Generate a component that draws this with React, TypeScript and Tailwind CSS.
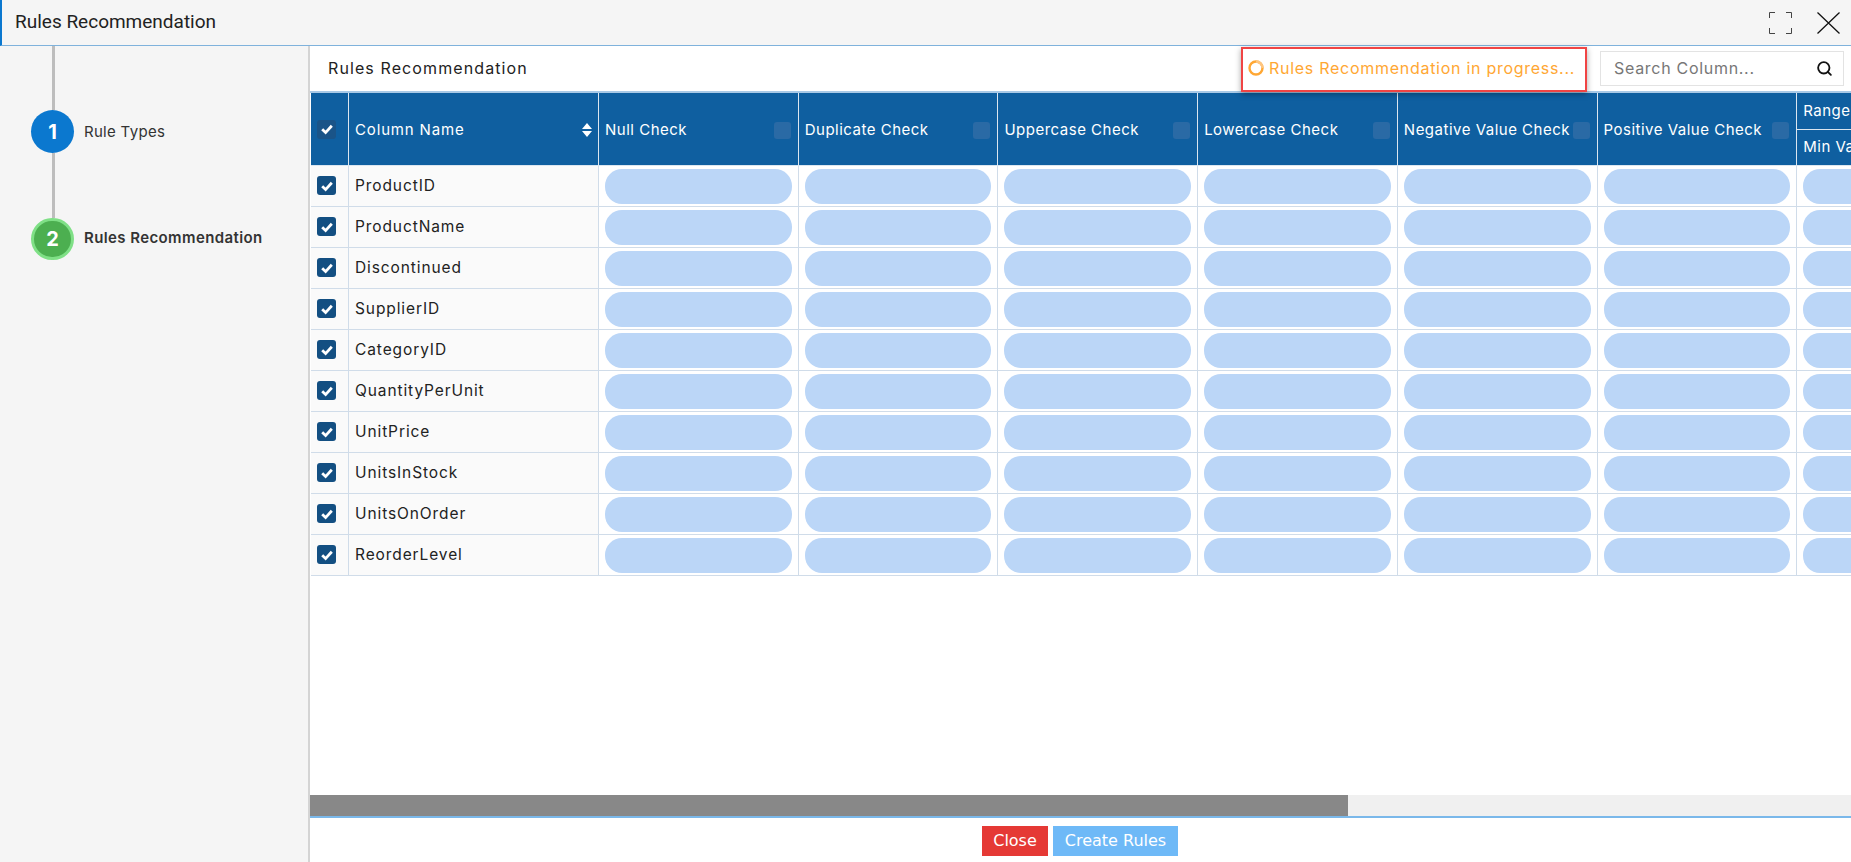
import { Search } from 'lucide-react';

const columns = ['ProductID', 'ProductName', 'Discontinued', 'SupplierID', 'CategoryID', 'QuantityPerUnit', 'UnitPrice', 'UnitsInStock', 'UnitsOnOrder', 'ReorderLevel'];
const checks = ['Null Check', 'Duplicate Check', 'Uppercase Check', 'Lowercase Check', 'Negative Value Check', 'Positive Value Check'];

function CheckBox({ dim }: { dim?: boolean }) {
  return (
    <span className={`flex h-[19px] w-[19px] items-center justify-center rounded-[3px] ${dim ? 'bg-[#1a5488]' : 'bg-[#134f82]'}`}>
      <svg viewBox="0 0 14 14" className="h-[14px] w-[14px]">
        <path d="M2.2 7.3 5.6 10.6 11.8 3.8" fill="none" stroke="#fff" strokeWidth="2.8" />
      </svg>
    </span>
  );
}

export default function App() {
  return (
    <div className="flex h-[862px] w-[1851px] flex-col overflow-hidden bg-white font-['Inter',sans-serif] text-[#222]">
      {/* Title bar */}
      <div className="flex h-[46px] shrink-0 items-center justify-between border-b border-b-[#7fb2dc] border-l-2 border-l-[#0b78cf] bg-[#f5f5f5] pl-[13px] pr-[11px]">
        <span className="font-['Roboto',sans-serif] text-[19px] text-[#222]">Rules Recommendation</span>
        <div className="flex items-center gap-[25px]">
          <svg viewBox="0 0 23 22" className="h-[22px] w-[23px]" fill="none" stroke="#444" strokeWidth="1">
            <path d="M.5 6V.5H6M17 .5h5.5V6M.5 16v5.5H6M17 21.5h5.5V16" />
          </svg>
          <svg viewBox="0 0 23 22" className="h-[22px] w-[23px]" fill="none" stroke="#111" strokeWidth="1.3">
            <path d="M.5.5l22 21M22.5.5l-22 21" />
          </svg>
        </div>
      </div>

      <div className="flex min-h-0 flex-1">
        {/* Stepper */}
        <div className="w-[310px] shrink-0 border-r-2 border-r-[#d4d4d4] bg-[#f5f5f5] pl-[31px]">
          <div className="ml-[21px] h-[64px] w-[3px] bg-[#bdbdbd]" />
          <div className="flex items-center gap-[10px]">
            <span className="flex h-[43px] w-[43px] items-center justify-center rounded-full bg-[#0b78cf] text-[20px] font-bold text-white">1</span>
            <span className="pt-[2px] text-[15px] tracking-[0.3px] text-[#333]">Rule Types</span>
          </div>
          <div className="ml-[21px] h-[65px] w-[3px] bg-[#bdbdbd]" />
          <div className="flex items-center gap-[10px]">
            <span className="flex h-[42px] w-[43px] items-center justify-center rounded-full border-[3px] border-[#7fe086] bg-[#4caf50] text-[20px] font-bold text-white">2</span>
            <span className="pb-[1px] text-[15px] font-semibold tracking-[0.4px] text-[#333]">Rules Recommendation</span>
          </div>
        </div>

        <div className="flex min-w-0 flex-1 flex-col">
          {/* Toolbar */}
          <div className="flex h-[47px] shrink-0 items-center border-b-2 border-b-[#a9c9e6] pl-[18px] pr-[7px]">
            <span className="pb-[2px] text-[16px] tracking-[1.1px] text-[#222]">Rules Recommendation</span>
            <div className="relative z-10 ml-auto flex h-[45px] w-[346px] translate-y-[1px] items-center gap-[5px] border-2 border-[#f04444] bg-white pb-[3px] pl-[5px] shadow-[0_2px_6px_rgba(0,0,0,0.35)]">
              <svg viewBox="0 0 16 16" className="h-4 w-4 shrink-0" fill="none">
                <circle cx="8" cy="8" r="6.5" stroke="#ffa733" strokeWidth="2.4" />
                <path d="M8 1.5a6.5 6.5 0 0 1 6.5 6.5" stroke="#ffc680" strokeWidth="2.4" />
              </svg>
              <span className="whitespace-nowrap text-[16px] tracking-[0.72px] text-[#ffa733]">Rules Recommendation in progress...</span>
            </div>
            <div className="ml-[13px] flex h-[35px] w-[244px] items-center justify-between border border-[#e3e3e3] pl-[13px] pr-[10px]">
              <span className="pb-[1px] text-[16px] tracking-[0.7px] text-[#777]">Search Column...</span>
              <Search size={17} strokeWidth={2.6} className="text-[#111]" />
            </div>
          </div>

          {/* Grid */}
          <div className="min-h-0 flex-1 overflow-hidden pl-[1px]">
            <table className="w-[1686px] table-fixed border-separate border-spacing-0 text-[15px]">
              <colgroup>
                <col className="w-[38px]" />
                <col className="w-[250px]" />
                {checks.map(c => <col key={c} className="w-[199.7px]" />)}
                <col className="w-[199.7px]" />
              </colgroup>
              <thead className="bg-[#0f5fa0] text-white">
                <tr className="h-[37px]">
                  <th rowSpan={2} className="border-r border-b border-[#dbe6f0] pl-[6px] align-middle">
                    <CheckBox dim />
                  </th>
                  <th rowSpan={2} className="border-r border-b border-[#dbe6f0] px-[6px] pt-[2px] text-left font-normal">
                    <div className="flex items-center justify-between tracking-[0.85px]">
                      Column Name
                      <svg viewBox="0 0 10 14" className="h-[14px] w-[10px]" fill="#fff">
                        <path d="M5 0 10 6H0zM0 8h10l-5 6z" />
                      </svg>
                    </div>
                  </th>
                  {checks.map(c => (
                    <th key={c} rowSpan={2} className="border-r border-b border-[#dbe6f0] pl-[6px] pr-[7px] pt-[2px] text-left font-normal">
                      <div className="flex items-center justify-between whitespace-nowrap tracking-[0.5px]">
                        {c}
                        <span className="h-[17px] w-[17px] rounded-[3px] bg-[#2a6aa5]" />
                      </div>
                    </th>
                  ))}
                  <th className="border-b border-[#dbe6f0] pl-[6px] text-left font-normal tracking-[0.5px]">Range</th>
                </tr>
                <tr className="h-[36px]">
                  <th className="border-b border-[#dbe6f0] pl-[6px] text-left font-normal tracking-[0.5px] whitespace-nowrap">Min Value</th>
                </tr>
              </thead>
              <tbody>
                {columns.map(name => (
                  <tr key={name} className="h-[41px]">
                    <td className="border-r border-b border-[#d0dce9] bg-[#fafafa] pb-[1px] pl-[6px]"><CheckBox /></td>
                    <td className="border-r border-b border-[#d0dce9] bg-[#fafafa] px-[6px] text-[15.5px] tracking-[0.9px] text-[#222]">{name}</td>
                    {[...checks, 'min'].map(c => (
                      <td key={c} className="border-r border-b border-[#d0dce9] px-[6px]">
                        <div className="h-[35px] rounded-[17px] bg-[#bbd6f7]" />
                      </td>
                    ))}
                  </tr>
                ))}
              </tbody>
            </table>
          </div>

          {/* Scrollbar */}
          <div className="h-[21px] shrink-0 bg-[#f0f0f0]">
            <div className="h-full w-[1038px] bg-[#888888]" />
          </div>

          {/* Footer */}
          <div className="flex h-[46px] shrink-0 items-start justify-center gap-[5px] border-t-2 border-t-[#7ab8ea] pt-[8px] pr-[1px] font-['DejaVu_Sans',sans-serif] text-[16px] text-white">
            <button className="h-[30px] w-[66px] bg-[#e53935]">Close</button>
            <button className="h-[30px] w-[125px] bg-[#6eb9f7]">Create Rules</button>
          </div>
        </div>
      </div>
    </div>
  );
}
